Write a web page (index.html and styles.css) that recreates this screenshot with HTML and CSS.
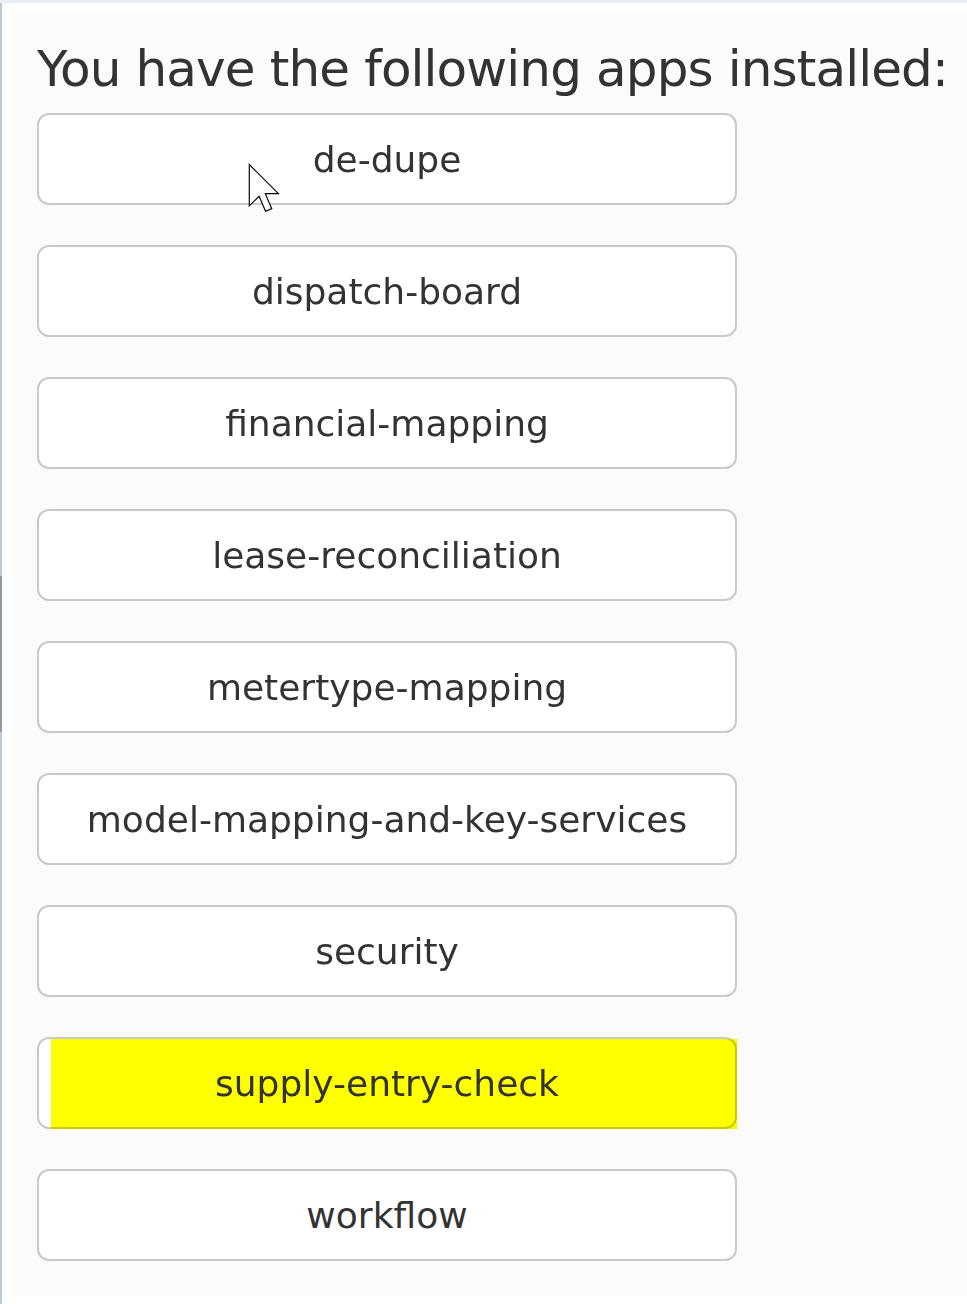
FILE: index.html
```html
<!DOCTYPE html>
<html lang="en">
<head>
<meta charset="utf-8">
<title>Installed apps</title>
<link rel="stylesheet" href="styles.css">
</head>
<body>
<div class="frame">
  <main class="panel">
    <h1 class="title">You have the following apps installed:</h1>
    <div class="apps">
      <button class="app">de-dupe</button>
      <button class="app">dispatch-board</button>
      <button class="app">financial-mapping</button>
      <button class="app">lease-reconciliation</button>
      <button class="app">metertype-mapping</button>
      <button class="app">model-mapping-and-key-services</button>
      <button class="app">security</button>
      <button class="app app-highlight"><span class="highlight"></span><span class="label">supply-entry-check</span></button>
      <button class="app">workflow</button>
    </div>
  </main>
  <svg class="cursor" width="32" height="50" viewBox="0 0 12.4 19.2" aria-hidden="true">
    <path d="M0.5 0.5 L0.5 16.5 L4.3 12.8 L6.8 18.6 L9.2 17.6 L6.7 11.8 L11.8 11.8 Z" fill="#fff" stroke="#000" stroke-width="0.45" stroke-linejoin="miter"/>
  </svg>
</div>
</body>
</html>
```
FILE: styles.css
```css
html, body {
  margin: 0;
  padding: 0;
  background: #ffffff;
}

.frame {
  position: relative;
  border-top: 3px solid #e7eef5;
  padding: 10px 0 9px 13px;
  background:
    linear-gradient(to bottom, #b9cbdb 0, #b9cbdb 573px, #8b9ba7 573px, #8b9ba7 729px, #b9cbdb 729px) left top / 2px 100% no-repeat,
    #ffffff;
  font-family: "DejaVu Sans", Verdana, sans-serif;
  color: #333333;
}

.panel {
  background: #fbfbfb;
  padding: 27px 0 35px 24px;
}

.title {
  margin: 0 0 15px 0;
  font-size: 50px;
  line-height: 58px;
  letter-spacing: -0.88px;
  font-weight: normal;
  white-space: nowrap;
  color: #333333;
}

.apps {
  display: flex;
  flex-direction: column;
  gap: 40px;
}

.app {
  position: relative;
  box-sizing: border-box;
  width: 700px;
  height: 92px;
  margin: 0;
  padding: 0;
  background: #ffffff;
  border: 2px solid #c9c9c9;
  border-radius: 12px;
  font-family: "DejaVu Sans", Verdana, sans-serif;
  font-size: 36px;
  color: #333333;
  text-align: center;
  cursor: pointer;
}

.app-highlight .label {
  position: relative;
}

.highlight {
  position: absolute;
  left: 12px;
  top: 0;
  right: -2px;
  bottom: -2px;
  background: #ffff00;
  mix-blend-mode: multiply;
}

.cursor {
  position: absolute;
  left: 248px;
  top: 160px;
}
```
